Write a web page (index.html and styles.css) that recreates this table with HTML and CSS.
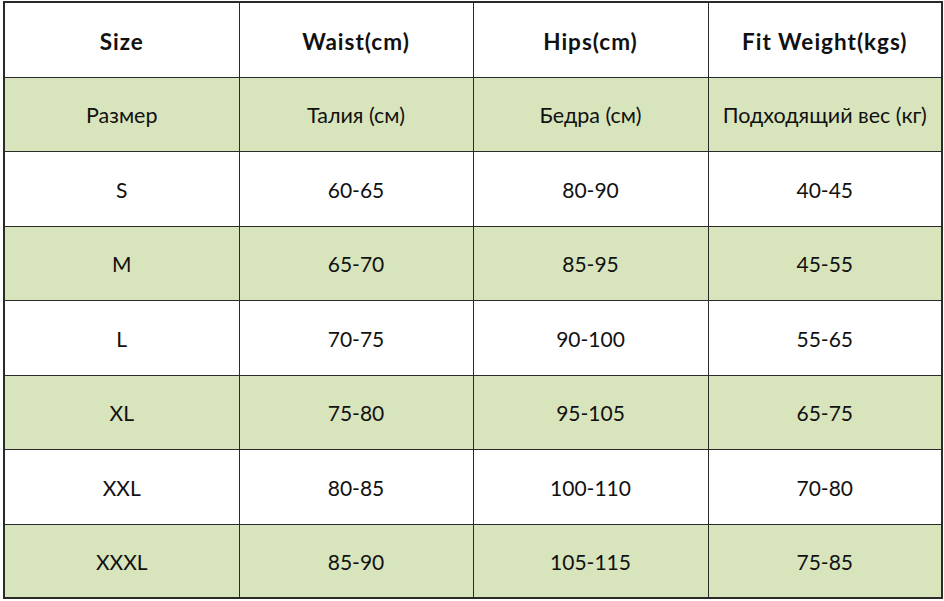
FILE: index.html
```html
<!DOCTYPE html>
<html lang="ru">
<head>
<meta charset="utf-8">
<title>Size chart</title>
<link rel="stylesheet" href="styles.css">
</head>
<body>
<table class="chart">
  <colgroup>
    <col class="c1"><col class="c2"><col class="c3"><col class="c4">
  </colgroup>
  <tr class="head"><th>Size</th><th>Waist(cm)</th><th>Hips(cm)</th><th>Fit Weight(kgs)</th></tr>
  <tr class="green ru"><td>Размер</td><td>Талия (см)</td><td>Бедра (см)</td><td>Подходящий вес (кг)</td></tr>
  <tr><td>S</td><td>60-65</td><td>80-90</td><td>40-45</td></tr>
  <tr class="green"><td>M</td><td>65-70</td><td>85-95</td><td>45-55</td></tr>
  <tr><td>L</td><td>70-75</td><td>90-100</td><td>55-65</td></tr>
  <tr class="green"><td>XL</td><td>75-80</td><td>95-105</td><td>65-75</td></tr>
  <tr><td>XXL</td><td>80-85</td><td>100-110</td><td>70-80</td></tr>
  <tr class="green"><td>XXXL</td><td>85-90</td><td>105-115</td><td>75-85</td></tr>
</table>
</body>
</html>
```
FILE: styles.css
```css
html, body {
  margin: 0;
  padding: 0;
  background: #fff;
}
body {
  padding: 1px 0 0 3px;
  font-family: Lato, "Open Sans", sans-serif;
  color: #111;
}
.chart {
  border-collapse: collapse;
  table-layout: fixed;
  width: 938px;
  border: 2px solid #2a2a2a;
}
.c1 { width: 235px; }
.c2 { width: 234px; }
.c3 { width: 235px; }
.c4 { width: 234px; }
.chart tr { height: 74px; }
.chart tr:nth-child(odd) { height: 75px; }
.chart th, .chart td {
  border: 1px solid #2a2a2a;
  text-align: center;
  vertical-align: middle;
  padding: 1px 0 0 0;
  font-size: 21px;
  font-weight: 400;
}
.chart th {
  font-weight: 700;
  font-size: 22.5px;
  letter-spacing: 1px;
  padding-top: 4px;
}
.green td { background: #d8e4bc; }
.ru td { font-size: 21.5px; }
```
